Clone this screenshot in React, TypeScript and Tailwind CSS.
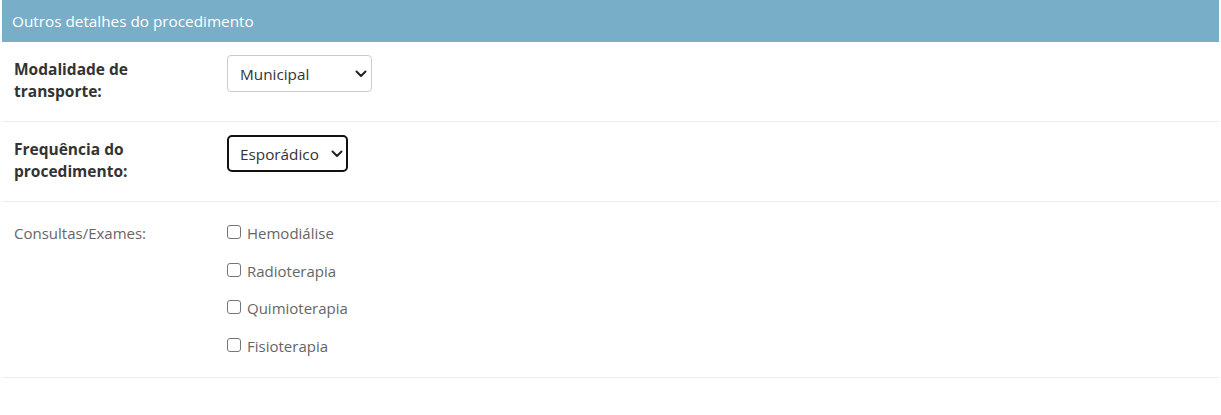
import { useState } from 'react';

const font = { fontFamily: '"Open Sans", "Noto Sans", sans-serif' };

function Chevron() {
  return (
    <svg width="12" height="8" viewBox="0 0 12 8" className="pointer-events-none absolute right-[5px] top-1/2 -translate-y-1/2">
      <path d="M1.5 1.5 L6 6 L10.5 1.5" fill="none" stroke="#222" strokeWidth="2" strokeLinecap="round" strokeLinejoin="round" />
    </svg>
  );
}

export default function App() {
  const [modalidade, setModalidade] = useState('Municipal');
  const [freq, setFreq] = useState('Esporádico');
  const exames = ['Hemodiálise', 'Radioterapia', 'Quimioterapia', 'Fisioterapia'];

  return (
    <div className="bg-white w-[1221px] h-[415px] text-[15px]" style={font}>
      <div className="mx-[2px]">
        <h2 className="bg-[#79aec8] text-white h-[42px] flex items-center px-[10px] text-[15.3px] font-normal">
          Outros detalhes do procedimento
        </h2>

        <div className="flex border-b border-[#eee] h-[80px] pt-[13px]">
          <label className="w-[225px] pl-[12px] pt-[3px] font-bold text-[15.5px] text-[#333] leading-[22px]">
            Modalidade de<br />transporte:
          </label>
          <div className="relative w-[145px] h-[37px]">
            <select
              value={modalidade}
              onChange={e => setModalidade(e.target.value)}
              className="appearance-none w-full h-full border border-[#ccc] rounded-[4px] pl-[12px] pt-[2px] text-[15.3px] text-[#333] bg-white outline-none"
            >
              <option>Municipal</option>
              <option>Intermunicipal</option>
            </select>
            <Chevron />
          </div>
        </div>

        <div className="flex border-b border-[#eee] h-[80px] pt-[13px]">
          <label className="w-[225px] pl-[12px] pt-[3px] font-bold text-[15.5px] text-[#333] leading-[22px]">
            Frequência do<br />procedimento:
          </label>
          <div className="relative w-[121px] h-[37px]">
            <select
              value={freq}
              onChange={e => setFreq(e.target.value)}
              className="appearance-none w-full h-full border-2 border-[#111] rounded-[5px] pl-[11px] pt-[2px] text-[15.3px] text-[#333] bg-white outline-none"
            >
              <option>Esporádico</option>
              <option>Contínuo</option>
            </select>
            <Chevron />
          </div>
        </div>

        <div className="flex border-b border-[#eee] h-[176px] pt-[20px]">
          <div className="w-[225px] pl-[12px] text-[#666] leading-[22px]">Consultas/Exames:</div>
          <div className="flex flex-col gap-[15.6px]">
            {exames.map(x => (
              <label key={x} className="flex items-center gap-[6px] text-[#666] leading-[22px]">
                <input
                  type="checkbox"
                  className="appearance-none w-[14px] h-[14px] border border-[#767676] rounded-[3px] bg-white checked:bg-[#0075ff] -mt-[2px]"
                />
                {x}
              </label>
            ))}
          </div>
        </div>
      </div>
    </div>
  );
}
